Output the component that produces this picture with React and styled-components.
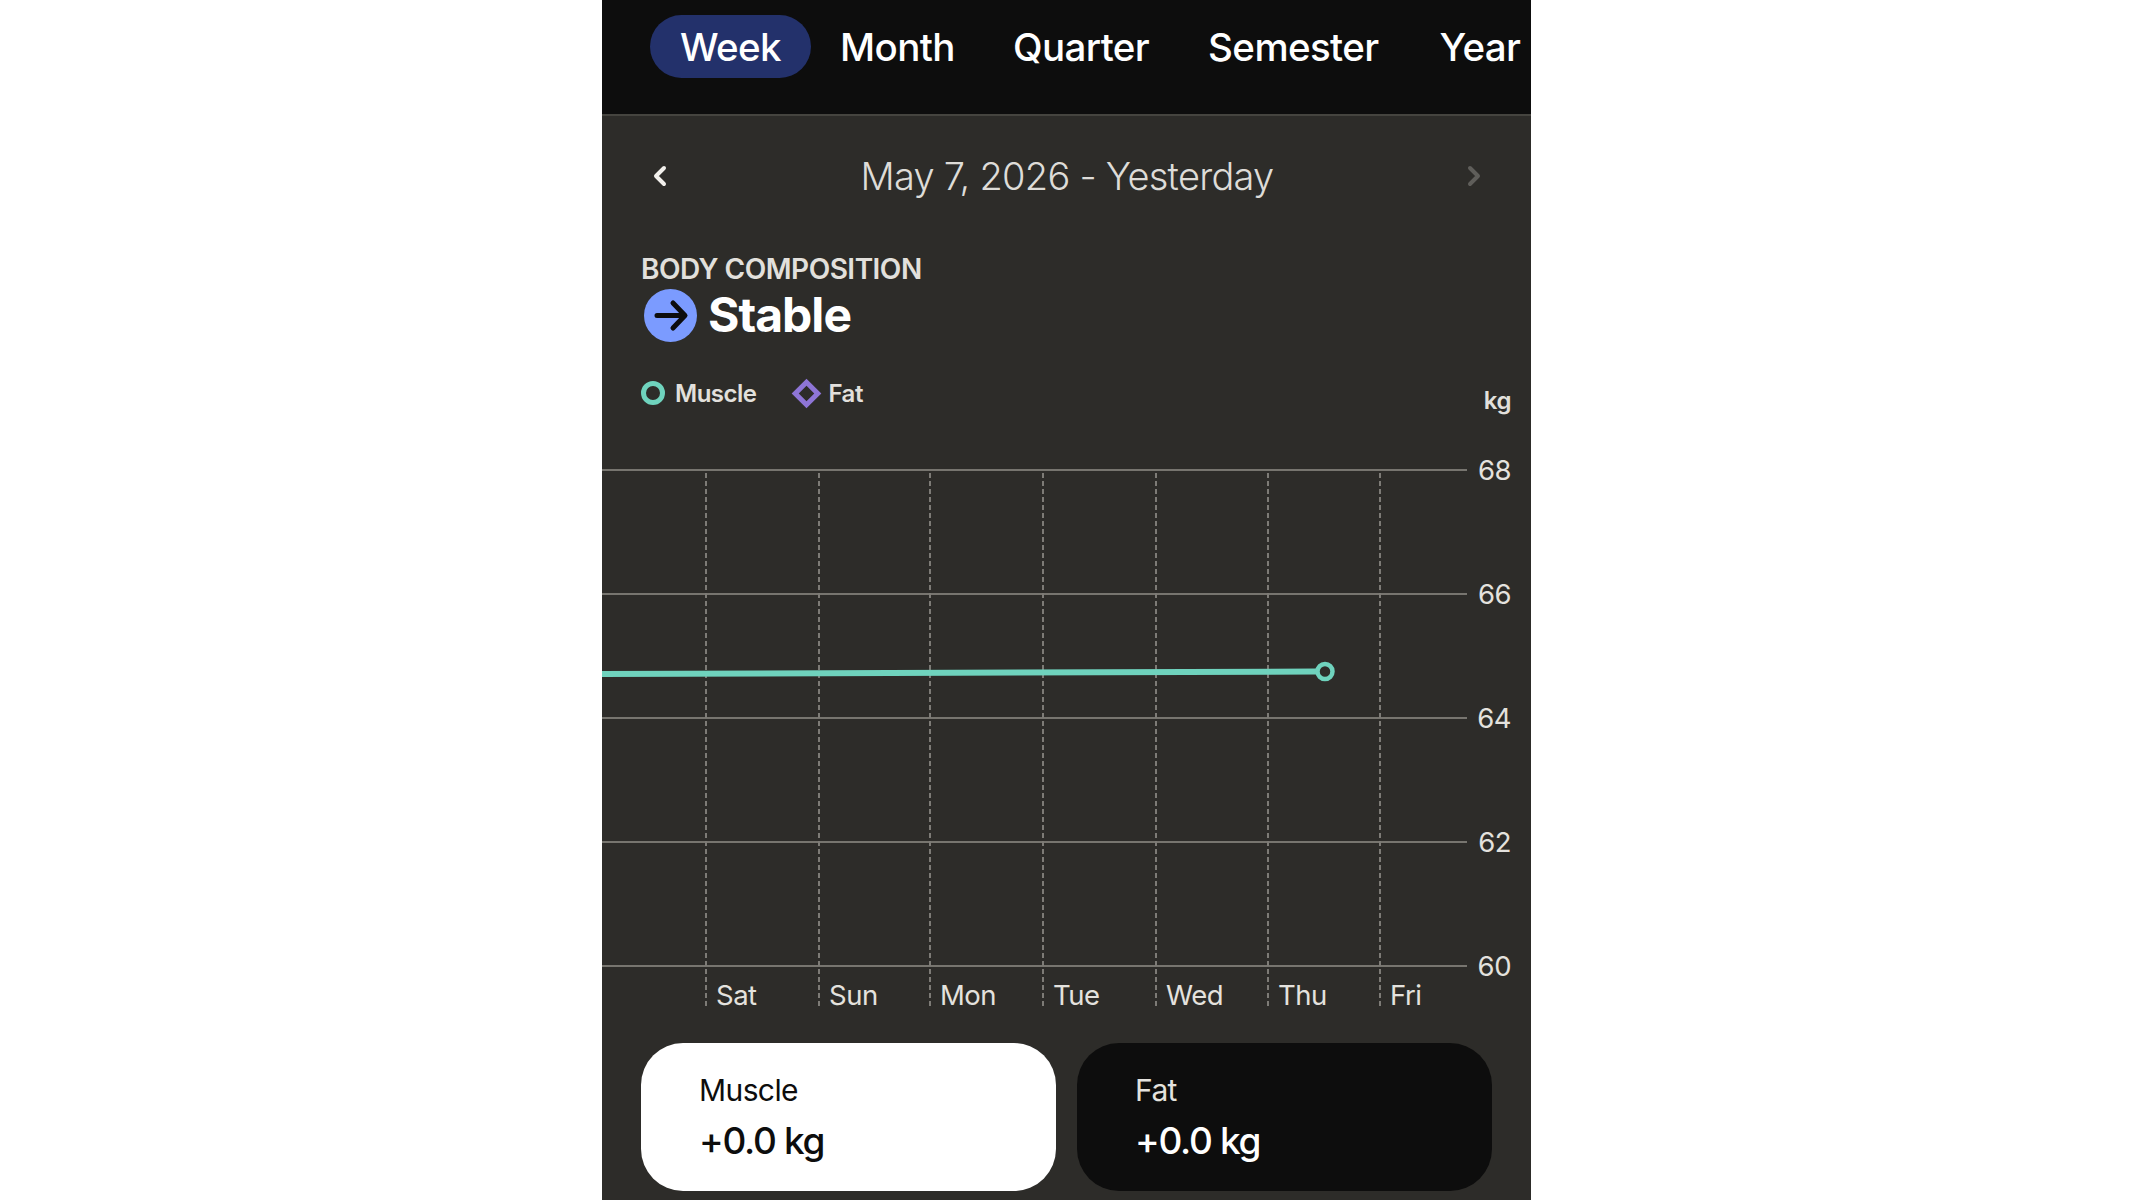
import React from 'react';
import styled, { createGlobalStyle } from 'styled-components';

const GlobalStyle = createGlobalStyle`
  html, body {
    margin: 0;
    background: #fff;
  }
  body {
    font-family: Inter, "Liberation Sans", sans-serif;
  }
`;

const Page = styled.div`
  display: flex;
  justify-content: center;
  height: 1200px;
  overflow: hidden;
`;

const Phone = styled.div`
  width: 929px;
  height: 1200px;
  background: #2d2c29;
  display: flex;
  flex-direction: column;
  overflow: hidden;
`;

const TabBar = styled.div`
  height: 116px;
  box-sizing: border-box;
  flex: none;
  background: #0d0d0d;
  border-bottom: 2px solid #45443f;
  display: flex;
  align-items: flex-start;
  padding: 15px 0 0 48px;
`;

const Tab = styled.div`
  height: 63px;
  margin-right: ${(p) => p.gap || 0}px;
  padding: 0 ${(p) => (p.active ? 30 : 0)}px;
  border-radius: 32px;
  background: ${(p) => (p.active ? '#23316b' : 'transparent')};
  color: #fff;
  font-size: 38.5px;
  font-weight: 500;
  letter-spacing: -0.6px;
  line-height: 65px;
  white-space: nowrap;
`;

const DateRow = styled.div`
  height: 120px;
  flex: none;
  display: flex;
  align-items: center;
  justify-content: space-between;
  padding: 0 48px 0 49px;
  box-sizing: border-box;
`;

const DateText = styled.div`
  color: #dedcd8;
  font-size: 38px;
  font-weight: 300;
  letter-spacing: -0.75px;
`;

const Chevron = styled.svg`
  width: 18px;
  height: 26px;
  fill: none;
  stroke: ${(p) => p.color};
  stroke-width: 4;
  stroke-linecap: round;
  stroke-linejoin: round;
`;

const Summary = styled.div`
  padding: 16px 0 0 39px;
`;

const Eyebrow = styled.div`
  color: #e2e0dc;
  font-size: 28px;
  font-weight: 600;
  letter-spacing: -0.5px;
  line-height: 34px;
`;

const StatusRow = styled.div`
  display: flex;
  align-items: center;
  gap: 11px;
  margin: 1px 0 0 3px;
`;

const StatusIcon = styled.svg`
  width: 53px;
  height: 53px;
  flex: none;
`;

const StatusText = styled.div`
  color: #fff;
  font-size: 48px;
  font-weight: 700;
  letter-spacing: -1px;
  line-height: 56px;
`;

const LegendRow = styled.div`
  display: flex;
  align-items: center;
  justify-content: space-between;
  height: 40px;
  margin-top: 30px;
  padding-right: 20px;
`;

const LegendItems = styled.div`
  display: flex;
  align-items: center;
`;

const LegendItem = styled.div`
  display: flex;
  align-items: center;
  gap: ${(p) => p.gap}px;
  margin-right: 36px;
  color: #e2e0dc;
  font-size: 24px;
  font-weight: 600;
  letter-spacing: -0.5px;
`;

const Ring = styled.span`
  width: 24px;
  height: 24px;
  box-sizing: border-box;
  border: 5.5px solid #6fd3bd;
  border-radius: 50%;
`;

const Diamond = styled.span`
  width: 21px;
  height: 21px;
  box-sizing: border-box;
  margin: 0 3px 0 4px;
  border: 5.5px solid #8e75d6;
  transform: rotate(45deg);
`;

const Unit = styled.div`
  color: #e2e0dc;
  font-size: 24px;
  font-weight: 600;
  letter-spacing: -0.5px;
  margin-top: 14px;
`;

const Chart = styled.svg`
  display: block;
  flex: none;
  width: 929px;
  height: 603px;
  margin-top: 27px;

  text {
    fill: #e4e2de;
    font-family: Inter, "Liberation Sans", sans-serif;
    font-size: 27.5px;
    font-weight: 400;
    letter-spacing: -0.5px;
  }
`;

const Cards = styled.div`
  display: flex;
  gap: 21px;
  padding: 0 39px;
`;

const Card = styled.div`
  flex: 1;
  height: 148px;
  box-sizing: border-box;
  padding: 29px 0 0 58px;
  border-radius: 42px;
  background: ${(p) => (p.dark ? '#0d0d0d' : '#fff')};
  color: ${(p) => (p.dark ? '#fff' : '#0d0d0d')};
`;

const CardLabel = styled.div`
  font-size: 30px;
  font-weight: 400;
  letter-spacing: -0.6px;
  line-height: 36px;
  color: ${(p) => (p.dark ? '#e4e2de' : '#0d0d0d')};
`;

const CardValue = styled.div`
  margin-top: 11px;
  font-size: 37px;
  font-weight: 500;
  letter-spacing: -1.3px;
  line-height: 44px;
`;

// chart svg starts at x=602, y=440 on the page
const top = 440;
const left = 602;
const gridLines = [
  { y: 470, label: '68' },
  { y: 594, label: '66' },
  { y: 718, label: '64' },
  { y: 842, label: '62' },
  { y: 966, label: '60' },
];
const days = [
  { x: 706, label: 'Sat' },
  { x: 819, label: 'Sun' },
  { x: 930, label: 'Mon' },
  { x: 1043, label: 'Tue' },
  { x: 1156, label: 'Wed' },
  { x: 1268, label: 'Thu' },
  { x: 1380, label: 'Fri' },
];

function WeightChart() {
  return (
    <Chart viewBox="0 0 929 603">
      {gridLines.map((g) => (
        <g key={g.label}>
          <line x1="0" x2="865" y1={g.y - top} y2={g.y - top} stroke="#77756f" strokeWidth="2" />
          <text x="909" y={g.y - top + 10} textAnchor="end">{g.label}</text>
        </g>
      ))}
      {days.map((d) => (
        <g key={d.label}>
          <line
            x1={d.x - left}
            x2={d.x - left}
            y1="33"
            y2="568"
            stroke="#7d7b76"
            strokeWidth="2"
            strokeDasharray="5 3"
          />
          <text x={d.x - left + 10} y="565">{d.label}</text>
        </g>
      ))}
      <line x1="0" x2="714" y1="234" y2="231.5" stroke="#6fd3bd" strokeWidth="6" />
      <circle cx="723" cy="231.5" r="7.5" fill="#2d2c29" stroke="#6fd3bd" strokeWidth="4.5" />
    </Chart>
  );
}

export default function App() {
  return (
    <>
      <GlobalStyle />
      <Page>
        <Phone>
          <TabBar>
            <Tab active gap={29}>Week</Tab>
            <Tab gap={58}>Month</Tab>
            <Tab gap={59}>Quarter</Tab>
            <Tab gap={61}>Semester</Tab>
            <Tab>Year</Tab>
          </TabBar>
          <DateRow>
            <Chevron viewBox="0 0 18 26" color="#f2f0ec"><path d="M13 5 5 13l8 8" /></Chevron>
            <DateText>May 7, 2026 - Yesterday</DateText>
            <Chevron viewBox="0 0 18 26" color="#5f5e5a"><path d="M5 5l8 8-8 8" /></Chevron>
          </DateRow>
          <Summary>
            <Eyebrow>BODY COMPOSITION</Eyebrow>
            <StatusRow>
              <StatusIcon viewBox="0 0 53 53">
                <circle cx="26.5" cy="26.5" r="26.5" fill="#7b9bff" />
                <path
                  d="M13 26.5h27M29 14l12 12.5L29 39"
                  fill="none"
                  stroke="#0d0d0d"
                  strokeWidth="5"
                  strokeLinecap="round"
                  strokeLinejoin="round"
                />
              </StatusIcon>
              <StatusText>Stable</StatusText>
            </StatusRow>
            <LegendRow>
              <LegendItems>
                <LegendItem gap={10}><Ring />Muscle</LegendItem>
                <LegendItem gap={8}><Diamond />Fat</LegendItem>
              </LegendItems>
              <Unit>kg</Unit>
            </LegendRow>
          </Summary>
          <WeightChart />
          <Cards>
            <Card>
              <CardLabel>Muscle</CardLabel>
              <CardValue>+0.0 kg</CardValue>
            </Card>
            <Card dark>
              <CardLabel dark>Fat</CardLabel>
              <CardValue>+0.0 kg</CardValue>
            </Card>
          </Cards>
        </Phone>
      </Page>
    </>
  );
}
